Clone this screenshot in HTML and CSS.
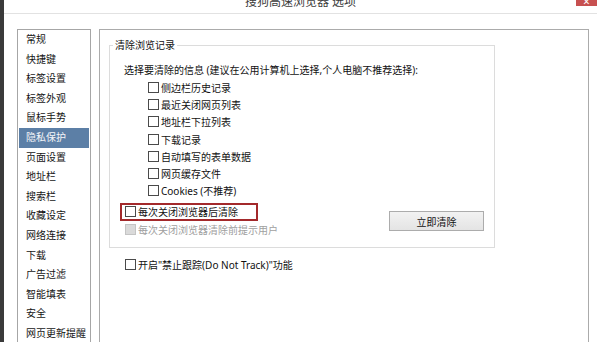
FILE: index.html
```html
<!DOCTYPE html>
<html lang="zh-CN">
<head>
<meta charset="utf-8">
<title>搜狗高速浏览器 选项</title>
<link rel="stylesheet" href="styles.css">
</head>
<body>
<div class="window">
  <div class="titlebar">
    <span class="title">搜狗高速浏览器 选项</span>
    <span class="close">×</span>
  </div>
  <div class="main">
    <ul class="nav">
      <li class="nav-item">常规</li>
      <li class="nav-item">快捷键</li>
      <li class="nav-item">标签设置</li>
      <li class="nav-item">标签外观</li>
      <li class="nav-item">鼠标手势</li>
      <li class="nav-item selected">隐私保护</li>
      <li class="nav-item">页面设置</li>
      <li class="nav-item">地址栏</li>
      <li class="nav-item">搜索栏</li>
      <li class="nav-item">收藏设定</li>
      <li class="nav-item">网络连接</li>
      <li class="nav-item">下载</li>
      <li class="nav-item">广告过滤</li>
      <li class="nav-item">智能填表</li>
      <li class="nav-item">安全</li>
      <li class="nav-item">网页更新提醒</li>
    </ul>
    <div class="content">
      <fieldset class="group">
        <legend class="group-title">清除浏览记录</legend>
        <div class="group-body">
          <div class="desc">选择要清除的信息 (建议在公用计算机上选择,个人电脑不推荐选择):</div>
          <div class="options">
            <label class="check-row"><span class="box"></span>侧边栏历史记录</label>
            <label class="check-row"><span class="box"></span>最近关闭网页列表</label>
            <label class="check-row"><span class="box"></span>地址栏下拉列表</label>
            <label class="check-row"><span class="box"></span>下载记录</label>
            <label class="check-row"><span class="box"></span>自动填写的表单数据</label>
            <label class="check-row"><span class="box"></span>网页缓存文件</label>
            <label class="check-row"><span class="box"></span>Cookies (不推荐)</label>
          </div>
        </div>
        <div class="actions">
          <div class="action-col">
            <label class="check-row highlight"><span class="box"></span>每次关闭浏览器后清除</label>
            <label class="check-row disabled"><span class="box"></span>每次关闭浏览器清除前提示用户</label>
          </div>
          <button class="btn" type="button">立即清除</button>
        </div>
      </fieldset>
      <label class="check-row dnt"><span class="box"></span>开启"禁止跟踪(Do Not Track)"功能</label>
    </div>
  </div>
</div>
</body>
</html>
```

FILE: styles.css
```css
* { box-sizing: border-box; }
html, body {
  margin: 0;
  padding: 0;
  width: 597px;
  height: 342px;
  overflow: hidden;
  background: #ffffff;
}
body {
  font-family: "Noto Sans", "Noto Sans CJK SC", sans-serif;
  font-size: 10px;
  color: #111111;
}
.window {
  display: flex;
  flex-direction: column;
  height: 342px;
  border-left: 4px solid #3a3a3a;
  background: #ffffff;
}
.titlebar {
  position: relative;
  height: 14px;
  border-bottom: 1px solid #e2e2e2;
  overflow: hidden;
  text-align: center;
  flex: none;
}
.title {
  display: block;
  font-size: 12px;
  line-height: 12px;
  margin-top: -4px;
  color: #3c3c3c;
}
.close {
  position: absolute;
  top: 0;
  right: 0;
  width: 21px;
  height: 6px;
  background: #c75050;
  color: #ffffff;
  font-size: 12px;
  line-height: 4px;
  text-align: center;
  overflow: hidden;
}
.main {
  display: flex;
  gap: 8px;
  padding: 15px 8px 0 13px;
  flex: 1;
  min-height: 0;
}
.nav {
  list-style: none;
  margin: 0;
  padding: 0;
  width: 74px;
  flex: none;
  border: 1px solid #a6a6a6;
  border-bottom: none;
}
.nav-item {
  height: 19.6px;
  line-height: 19.6px;
  padding-left: 8px;
  white-space: nowrap;
  color: #151515;
}
.nav-item.selected {
  margin: 0 1px;
  padding-left: 7px;
  background: #5c7fa6;
  color: #f4f6f9;
}
.content {
  flex: 1;
  border: 1px solid #ababab;
  border-bottom: none;
  padding: 8px 0 0 9px;
}
.group {
  margin: 0;
  width: 386px;
  border: 1px solid #dcdcdc;
  padding: 0 10px 9px 0;
  min-inline-size: 0;
}
.group-title {
  padding: 0 2px;
  margin-left: 3px;
  line-height: 14px;
  color: #111111;
}
.group-body {
  padding-left: 14px;
}
.desc {
  margin-top: 9px;
  height: 18px;
  line-height: 18px;
  white-space: nowrap;
}
.options {
  padding-left: 24px;
}
.check-row {
  display: flex;
  align-items: center;
  gap: 2px;
  height: 17.2px;
  white-space: nowrap;
}
.box {
  display: inline-block;
  width: 11px;
  height: 11px;
  border: 1px solid #4a4a4a;
  background: #ffffff;
  flex: none;
}
.actions {
  display: flex;
  justify-content: space-between;
  align-items: center;
  margin-top: 3.5px;
  padding-left: 10px;
}
.action-col {
  display: flex;
  flex-direction: column;
}
.highlight {
  width: 138px;
  height: 18px;
  border: 2px solid #a3292b;
  padding-left: 3px;
}
.disabled {
  height: 17px;
  padding-left: 5px;
  color: #a0a0a0;
}
.disabled .box {
  border-color: #c4c4c4;
  background: #dadada;
}
.btn {
  width: 95px;
  height: 20px;
  margin-top: 2px;
  padding: 0;
  border: 1px solid #acacac;
  background: linear-gradient(#f2f2f2, #e4e4e4);
  font-family: "Noto Sans", "Noto Sans CJK SC", sans-serif;
  font-size: 10px;
  color: #111111;
}
.dnt {
  margin-top: 8.5px;
  padding-left: 16px;
  height: 17px;
}
```
